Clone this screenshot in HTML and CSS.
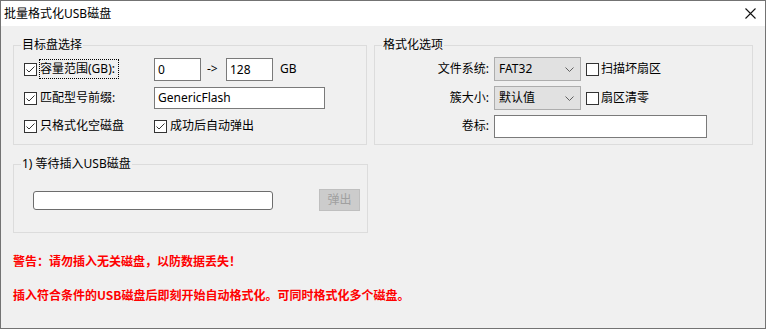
FILE: index.html
```html
<!DOCTYPE html>
<html lang="zh-CN">
<head>
<meta charset="utf-8">
<title>批量格式化USB磁盘</title>
<link rel="stylesheet" href="styles.css">
</head>
<body>
<div class="window">
  <div class="titlebar">
    <span class="title">批量格式化USB磁盘</span>
    <svg class="close" width="11" height="11" viewBox="0 0 11 11"><path d="M0.5 0.5L10.5 10.5M10.5 0.5L0.5 10.5" stroke="#111" stroke-width="1.1" fill="none"/></svg>
  </div>
  <div class="content">
    <div class="top-groups">
      <div class="group g1">
        <div class="legend"><span>目标盘选择</span></div>
        <div class="rows1">
          <div class="row r1">
            <div class="chk-cell">
              <span class="cb"><svg width="11" height="11" viewBox="0 0 11 11"><path d="M1.5 5.5L4 8L9.5 2.5" stroke="#333" stroke-width="1" fill="none"/></svg></span>
              <span class="focus">容量范围(GB):</span>
            </div>
            <div class="input w47">0</div>
            <span class="arrow">-&gt;</span>
            <div class="input w47">128</div>
            <span class="unit">GB</span>
          </div>
          <div class="row r2">
            <div class="chk-cell">
              <span class="cb"><svg width="11" height="11" viewBox="0 0 11 11"><path d="M1.5 5.5L4 8L9.5 2.5" stroke="#333" stroke-width="1" fill="none"/></svg></span>
              <span class="cb-label">匹配型号前缀:</span>
            </div>
            <div class="input wide">GenericFlash</div>
          </div>
          <div class="row r3">
            <div class="chk-cell">
              <span class="cb"><svg width="11" height="11" viewBox="0 0 11 11"><path d="M1.5 5.5L4 8L9.5 2.5" stroke="#333" stroke-width="1" fill="none"/></svg></span>
              <span class="cb-label">只格式化空磁盘</span>
            </div>
            <div class="chk-cell2">
              <span class="cb"><svg width="11" height="11" viewBox="0 0 11 11"><path d="M1.5 5.5L4 8L9.5 2.5" stroke="#333" stroke-width="1" fill="none"/></svg></span>
              <span class="cb-label">成功后自动弹出</span>
            </div>
          </div>
        </div>
      </div>
      <div class="group g2">
        <div class="legend"><span>格式化选项</span></div>
        <div class="row r1">
          <span class="label-r">文件系统:</span>
          <div class="select"><span>FAT32</span><svg width="9" height="5" viewBox="0 0 9 5"><path d="M0.5 0.5L4.5 4.5L8.5 0.5" stroke="#606060" stroke-width="1" fill="none"/></svg></div>
          <div class="opt-chk"><span class="cb"></span><span class="cb-label2">扫描坏扇区</span></div>
        </div>
        <div class="row r2">
          <span class="label-r">簇大小:</span>
          <div class="select"><span>默认值</span><svg width="9" height="5" viewBox="0 0 9 5"><path d="M0.5 0.5L4.5 4.5L8.5 0.5" stroke="#606060" stroke-width="1" fill="none"/></svg></div>
          <div class="opt-chk"><span class="cb"></span><span class="cb-label2">扇区清零</span></div>
        </div>
        <div class="row r3">
          <span class="label-r">卷标:</span>
          <div class="input vol"></div>
        </div>
      </div>
    </div>
    <div class="group g3">
      <div class="legend"><span>1) 等待插入USB磁盘</span></div>
      <div class="row slot">
        <div class="bar"></div>
        <div class="btn">弹出</div>
      </div>
    </div>
    <p class="warn w1">警告：请勿插入无关磁盘，以防数据丢失！</p>
    <p class="warn w2">插入符合条件的USB磁盘后即刻开始自动格式化。可同时格式化多个磁盘。</p>
  </div>
</div>
</body>
</html>
```
FILE: styles.css
```css
* { box-sizing: border-box; }
html, body { margin: 0; padding: 0; }
body {
  width: 766px;
  height: 329px;
  overflow: hidden;
  font-family: "Noto Sans", "Noto Sans CJK SC", sans-serif;
  font-size: 12px;
  line-height: 16px;
  color: #000;
  background: #f0f0f0;
}
.window {
  width: 766px;
  height: 329px;
  border: 1px solid #737373;
  background: #f0f0f0;
  display: flex;
  flex-direction: column;
}
.titlebar {
  flex: none;
  height: 25px;
  background: #fff;
  display: flex;
  align-items: center;
  justify-content: space-between;
  padding: 0 9px 0 3px;
}
.close { display: block; }
.content {
  flex: none;
  padding: 19px 12px 0 12px;
}
.top-groups {
  display: flex;
  gap: 7px;
}
.group {
  border: 1px solid #dcdcdc;
}
.legend {
  margin-top: -9px;
  height: 16px;
  padding-left: 7px;
}
.legend span {
  background: #f0f0f0;
  padding: 0 1px;
}
.g1 {
  width: 355px;
  padding-bottom: 6px;
}
.g2 {
  width: 380px;
  padding-bottom: 6px;
}
.rows1 { padding-left: 10px; }
.row {
  display: flex;
  align-items: center;
  height: 24px;
}
.r1 { margin-top: 4px; }
.r2 { margin-top: 5px; }
.r3 { margin-top: 4px; }
.chk-cell {
  flex: none;
  width: 130px;
  display: flex;
  align-items: center;
}
.chk-cell2 {
  display: flex;
  align-items: center;
}
.cb {
  flex: none;
  display: block;
  width: 13px;
  height: 13px;
  border: 1px solid #333;
  background: #fff;
}
.cb svg { display: block; }
.cb-label { margin-left: 3px; }
.focus {
  margin-left: 2px;
  height: 20px;
  line-height: 18px;
  padding: 0 3px 0 0;
  border: 1px dotted #000;
}
.input {
  flex: none;
  background: #fff;
  border: 1px solid #7a7a7a;
  height: 23px;
  line-height: 21px;
  padding: 0 3px;
}
.w47 { width: 47px; }
.arrow {
  flex: none;
  width: 25px;
  padding-left: 6px;
}
.unit { margin-left: 7px; }
.wide {
  width: 171px;
  height: 22px;
  line-height: 20px;
}
.label-r {
  flex: none;
  width: 114px;
  text-align: right;
  margin-right: 5px;
}
.select {
  flex: none;
  width: 87px;
  height: 24px;
  background: #e1e1e1;
  border: 1px solid #adadad;
  display: flex;
  align-items: center;
  justify-content: space-between;
  padding: 0 6px 0 4px;
}
.select svg { display: block; }
.opt-chk {
  margin-left: 5px;
  display: flex;
  align-items: center;
}
.cb-label2 { margin-left: 2px; }
.vol {
  width: 213px;
  height: 23px;
}
.g3 {
  width: 355px;
  margin-top: 19px;
  padding-bottom: 21px;
}
.slot {
  margin-top: 17px;
  height: 22px;
  padding-left: 19px;
}
.bar {
  flex: none;
  width: 240px;
  height: 19px;
  background: #fff;
  border: 1px solid #6d6d6d;
  border-radius: 3px;
}
.btn {
  flex: none;
  margin-left: 46px;
  width: 41px;
  height: 22px;
  background: #cccccc;
  border: 1px solid #bfbfbf;
  color: #a0a0a0;
  text-align: center;
  line-height: 20px;
}
.warn {
  margin: 0;
  color: #ff0000;
  font-weight: bold;
  font-family: "Noto Sans CJK SC", "Noto Sans", sans-serif;
}
.w1 { margin-top: 20px; }
.w2 { margin-top: 18px; }
```
